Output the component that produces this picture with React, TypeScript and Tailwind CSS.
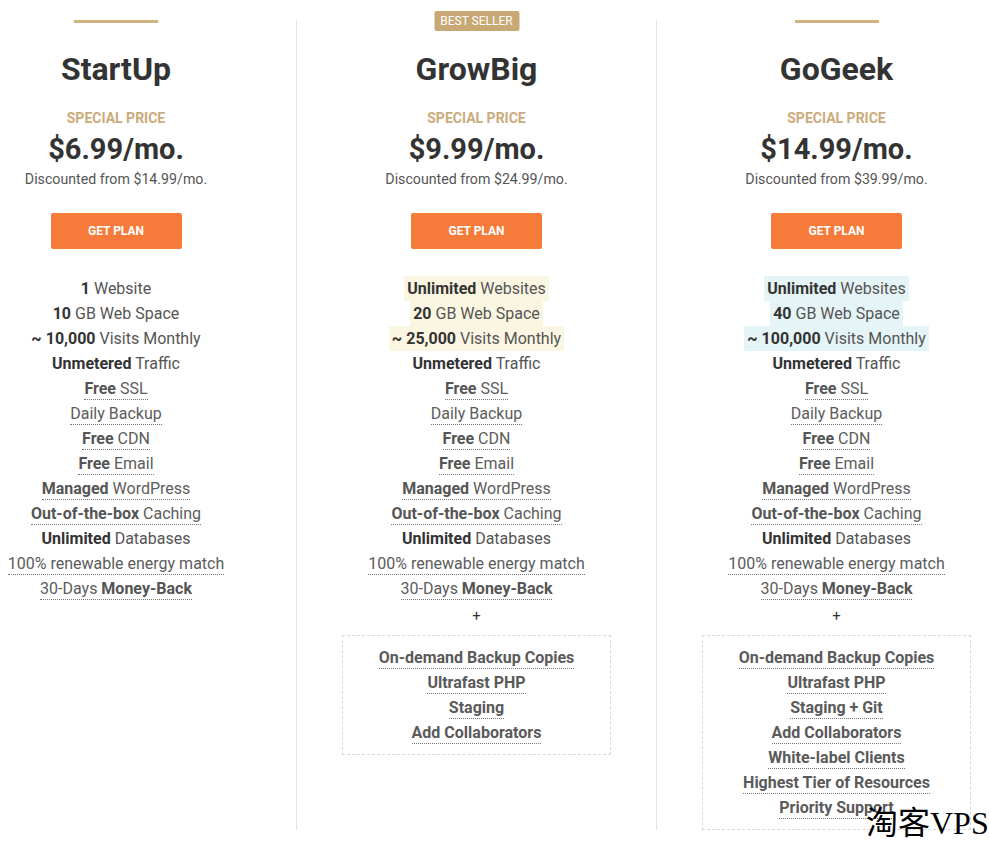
import React from "react";

type Feature = { b?: string; t?: string; pre?: string; post?: string; u?: boolean; hl?: boolean };

type Plan = {
  name: string;
  price: string;
  from: string;
  badge?: boolean;
  hl?: string;
  features: Feature[];
  extras?: string[];
};

const common: Feature[] = [
  { b: "Unmetered", t: " Traffic" },
  { b: "Free", t: " SSL", u: true },
  { t: "Daily Backup", u: true },
  { b: "Free", t: " CDN", u: true },
  { b: "Free", t: " Email", u: true },
  { b: "Managed", t: " WordPress", u: true },
  { b: "Out-of-the-box", t: " Caching", u: true },
  { b: "Unlimited", t: " Databases" },
  { t: "100% renewable energy match", u: true },
  { pre: "30-Days ", b: "Money-Back", u: true },
];

const plans: Plan[] = [
  {
    name: "StartUp",
    price: "$6.99/mo.",
    from: "Discounted from $14.99/mo.",
    features: [
      { b: "1", t: " Website" },
      { b: "10", t: " GB Web Space" },
      { pre: "~ ", b: "10,000", t: " Visits Monthly" },
      ...common,
    ],
  },
  {
    name: "GrowBig",
    price: "$9.99/mo.",
    from: "Discounted from $24.99/mo.",
    badge: true,
    hl: "bg-[#fbf6e2]",
    features: [
      { b: "Unlimited", t: " Websites", hl: true },
      { b: "20", t: " GB Web Space", hl: true },
      { pre: "~ ", b: "25,000", t: " Visits Monthly", hl: true },
      ...common,
    ],
    extras: ["On-demand Backup Copies", "Ultrafast PHP", "Staging", "Add Collaborators"],
  },
  {
    name: "GoGeek",
    price: "$14.99/mo.",
    from: "Discounted from $39.99/mo.",
    hl: "bg-[#e5f4f6]",
    features: [
      { b: "Unlimited", t: " Websites", hl: true },
      { b: "40", t: " GB Web Space", hl: true },
      { pre: "~ ", b: "100,000", t: " Visits Monthly", hl: true },
      ...common,
    ],
    extras: [
      "On-demand Backup Copies",
      "Ultrafast PHP",
      "Staging + Git",
      "Add Collaborators",
      "White-label Clients",
      "Highest Tier of Resources",
      "Priority Support",
    ],
  },
];

function FeatureRow({ f, hl }: { f: Feature; hl?: string }) {
  if (f.u) {
    return (
      <div className="flex h-[25px] items-center justify-center">
        <span className="inline-block border-b border-dotted border-[#777] leading-[21px] text-[#5c5c5c]">
          {f.pre}
          {f.b && <b className="font-bold text-[#555]">{f.b}</b>}
          {f.t}
        </span>
      </div>
    );
  }
  return (
    <div className="flex h-[25px] items-center justify-center">
      <span className={`inline-block px-[3px] leading-[25px] text-[#555] ${f.hl && hl ? hl : ""}`}>
        {f.pre && <b className="font-bold text-[#333]">{f.pre}</b>}
        {f.b && <b className="font-bold text-[#333]">{f.b}</b>}
        {f.t}
      </span>
    </div>
  );
}

function PlanColumn({ plan, first }: { plan: Plan; first?: boolean }) {
  return (
    <div
      className={`relative mt-5 flex w-[360px] shrink-0 flex-col items-center ${
        first ? "" : "border-l border-[#e2e2e2]"
      }`}
    >
      {plan.badge ? (
        <div className="absolute -top-[9px] left-1/2 flex h-5 w-[85px] -translate-x-1/2 items-center justify-center rounded-[2px] bg-[#c8a874] text-[12px] leading-none text-white">
          BEST SELLER
        </div>
      ) : null}
      <div className={`h-[3px] w-[84px] ${plan.badge ? "" : "bg-[#cfb27f]"}`} />
      <h2 className="mt-[26px] text-[32px] font-bold leading-[40px] text-[#333]">{plan.name}</h2>
      <div className="mt-[20px] text-[14px] font-bold leading-[18px] text-[#cbab7c]">SPECIAL PRICE</div>
      <div className="mt-[5px] text-[29px] font-bold leading-[34px] text-[#333]">{plan.price}</div>
      <div className="mt-[3px] text-[14.2px] leading-[20px] text-[#555]">{plan.from}</div>
      <button
        type="button"
        className="mt-[24px] h-9 w-[131px] rounded-[2px] bg-[#f67b3a] text-[12px] font-bold text-white"
      >
        GET PLAN
      </button>
      <div className="mt-[27px] w-full text-[16px]">
        {plan.features.map((f, i) => (
          <FeatureRow key={i} f={f} hl={plan.hl} />
        ))}
      </div>
      {plan.extras ? (
        <>
          <div className="mt-[3px] flex h-[25px] items-center justify-center text-[15px] text-[#333]">+</div>
          <div className="mt-[6px] w-[269px] border border-dashed border-[#d9d9d9] py-[9px] text-[16px]">
            {plan.extras.map((e) => (
              <div key={e} className="flex h-[25px] items-center justify-center">
                <span className="inline-block border-b border-dotted border-[#777] font-bold leading-[21px] text-[#5a5a5a]">
                  {e}
                </span>
              </div>
            ))}
          </div>
        </>
      ) : null}
    </div>
  );
}

export default function App() {
  return (
    <div
      className="relative h-[842px] w-[989px] overflow-hidden bg-white"
      style={{ fontFamily: "Roboto, 'Liberation Sans', sans-serif" }}
    >
      <div className="-ml-[64px] flex items-stretch pb-3">
        {plans.map((p, i) => (
          <PlanColumn key={p.name} plan={p} first={i === 0} />
        ))}
      </div>
      <div
        className="absolute left-[866px] top-[803px] text-[32px] leading-[40px] text-black"
        style={{ fontFamily: "'Liberation Serif', 'Noto Sans CJK SC', serif" }}
      >
        淘客VPS
      </div>
    </div>
  );
}
